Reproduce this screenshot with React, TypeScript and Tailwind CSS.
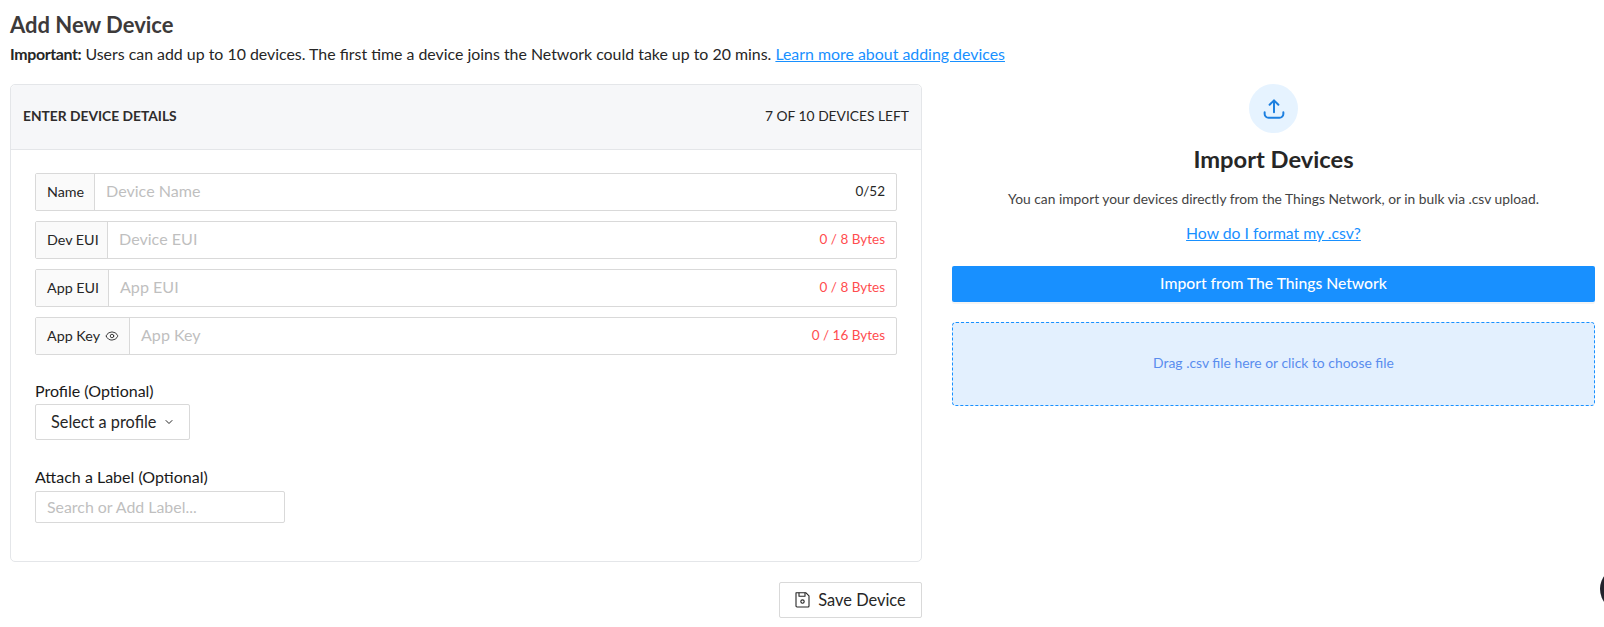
import { ChevronDown, Eye } from 'lucide-react';

const rows = [
  { label: 'Name', placeholder: 'Device Name', count: '0/52', addonWidth: 'w-[59px]', error: false },
  { label: 'Dev EUI', placeholder: 'Device EUI', count: '0 / 8 Bytes', addonWidth: 'w-[72px]', error: true },
  { label: 'App EUI', placeholder: 'App EUI', count: '0 / 8 Bytes', addonWidth: 'w-[73px]', error: true },
  { label: 'App Key', placeholder: 'App Key', count: '0 / 16 Bytes', addonWidth: 'w-[94px]', error: true, eye: true },
];

export default function App() {
  return (
    <div className="relative h-[627px] w-[1604px] overflow-hidden bg-white px-[10px] font-['Lato',sans-serif] text-[#262626]">
      {/* Page heading */}
      <h1 className="pt-[11px] text-[22px] font-bold leading-[28px] text-[#3d3a3a]">Add New Device</h1>
      <p className="mt-[4px] text-[15.9px] leading-[22px] text-[#262626]">
        <span className="font-bold tracking-[-0.35px]">Important:</span> Users can add up to 10 devices. The first time a device joins the Network could take up to 20 mins.{' '}
        <a href="#" className="text-[#1890ff] underline">Learn more about adding devices</a>
      </p>

      <div className="mt-[19px] flex">
        {/* Device form */}
        <div className="w-[912px] shrink-0">
          <div className="h-[478px] rounded-[5px] border border-[#e4e6e9]">
            <div className="flex h-[65px] items-center justify-between rounded-t-[5px] border-b border-[#e4e6e9] bg-[#f6f7f9] px-[12px] pb-[2px] text-[13.8px]">
              <span className="font-bold text-[#2e2c2c]">ENTER DEVICE DETAILS</span>
              <span className="text-[#262626]">7 OF 10 DEVICES LEFT</span>
            </div>

            <div className="px-[24px] pt-[23px]">
              <div className="flex flex-col gap-[10px]">
                {rows.map((row) => (
                  <div key={row.label} className="flex h-[38px] rounded-[2px] border border-[#d9d9d9]">
                    <div className={`flex shrink-0 items-center gap-[5px] border-r border-[#d9d9d9] bg-[#fafafa] pb-[1px] pl-[11px] text-[14.3px] text-[#262626] ${row.addonWidth}`}>
                      {row.label}
                      {row.eye && <Eye size={14} strokeWidth={1.5} />}
                    </div>
                    <div className="flex flex-1 items-center justify-between px-[11px] pb-[1px] text-[16.1px]">
                      <span className="text-[#bfbfbf]">{row.placeholder}</span>
                      <span className={row.error ? 'text-[13.5px] text-[#ff4d4f]' : 'text-[13.5px] text-[#262626]'}>{row.count}</span>
                    </div>
                  </div>
                ))}
              </div>

              <div className="mt-[25px] text-[16px] leading-[22px] text-[#1a1a1a]">Profile (Optional)</div>
              <button className="mt-[2px] flex h-[36px] w-[155px] items-center gap-[7px] rounded-[2px] border border-[#d9d9d9] pl-[15px] text-[16.3px] text-[#262626]">
                Select a profile
                <ChevronDown size={12} />
              </button>

              <div className="mt-[26px] text-[16px] leading-[22px] text-[#1a1a1a]">Attach a Label (Optional)</div>
              <div className="mt-[3px] flex h-[32px] w-[250px] items-center rounded-[2px] border border-[#d9d9d9] pl-[11px] text-[15.9px] text-[#bfbfbf]">
                Search or Add Label...
              </div>
            </div>
          </div>

          <div className="mt-[20px] flex justify-end">
            <button className="flex h-[36px] w-[143px] items-center justify-center gap-[8px] rounded-[2px] border border-[#d9d9d9] text-[16.4px] text-[#262626]">
              <svg width="15" height="16" viewBox="0 0 15 16" fill="none" stroke="#262626" strokeWidth="1.1" strokeLinejoin="round">
                <path d="M1 .8h10l3 3V14a1 1 0 0 1-1 1H2a1 1 0 0 1-1-1V.8Z" />
                <path d="M4 .8v3.4h6V.8" />
                <circle cx="7.5" cy="9.6" r="1.7" />
              </svg>
              Save Device
            </button>
          </div>
        </div>

        {/* Import panel */}
        <div className="ml-[30px] w-[643px] shrink-0">
          <div className="flex flex-col items-center">
            <div className="flex h-[49px] w-[49px] items-center justify-center rounded-full bg-[#e6f3ff]">
              <svg width="22" height="22" viewBox="0 0 20 20" fill="none" stroke="#1c7fe0" strokeWidth="1.8" strokeLinecap="round" strokeLinejoin="round">
                <path d="M10 13V2.5" />
                <path d="M6 6.2 10 2.2l4 4" />
                <path d="M1.5 13v1.5a3.5 3.5 0 0 0 3.5 3.5h10a3.5 3.5 0 0 0 3.5-3.5V13" />
              </svg>
            </div>
            <h2 className="mt-[9px] text-[23.7px] font-bold leading-[34px] text-[#262626]">Import Devices</h2>
            <p className="mt-[13px] text-[13.8px] leading-[20px] text-[#434343]">
              You can import your devices directly from the Things Network, or in bulk via .csv upload.
            </p>
            <a href="#" className="mt-[13px] text-[15.75px] leading-[22px] text-[#1890ff] underline">How do I format my .csv?</a>
          </div>

          <button className="mt-[22px] h-[36px] w-full rounded-[2px] bg-[#1890ff] text-[15.7px] font-medium text-white shadow-[0_2px_0_rgba(0,0,0,0.045)]">
            Import from The Things Network
          </button>

          <div className="mt-[20px] flex h-[84px] items-center justify-center rounded-[4px] border border-dashed border-[#1890ff] bg-[#e3f0fe] pb-[2px] text-[13.9px] text-[#5a8dee]">
            Drag .csv file here or click to choose file
          </div>
        </div>
      </div>

      {/* Chat launcher, mostly off the page */}
      <div className="absolute left-[1600px] top-[567px] h-[44px] w-[44px] rounded-full bg-[#22222c]" />
    </div>
  );
}
